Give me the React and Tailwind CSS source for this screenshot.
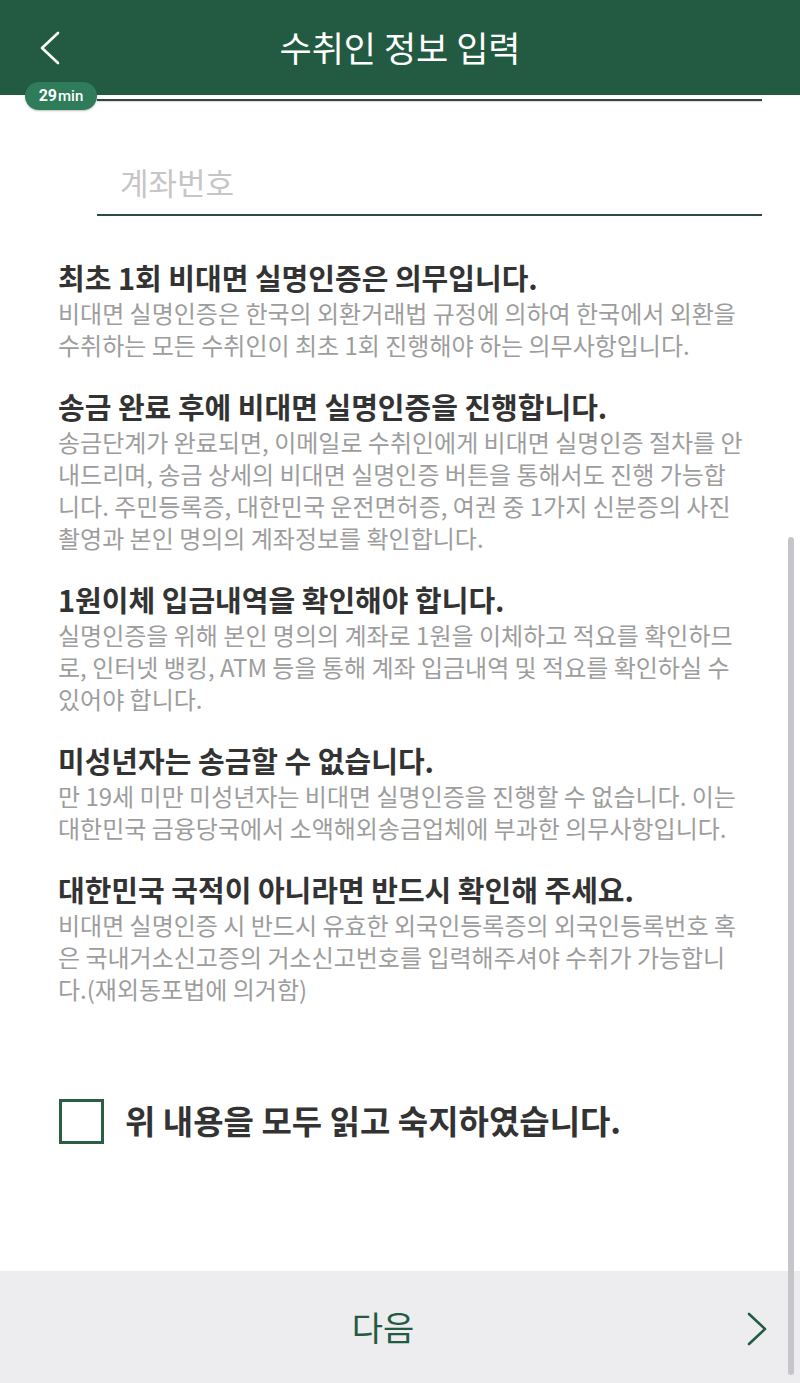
import React from "react";

const sections = [
  {
    title: "최초 1회 비대면 실명인증은 의무입니다.",
    lines: [
      "비대면 실명인증은 한국의 외환거래법 규정에 의하여 한국에서 외환을",
      "수취하는 모든 수취인이 최초 1회 진행해야 하는 의무사항입니다.",
    ],
  },
  {
    title: "송금 완료 후에 비대면 실명인증을 진행합니다.",
    lines: [
      "송금단계가 완료되면, 이메일로 수취인에게 비대면 실명인증 절차를 안",
      "내드리며, 송금 상세의 비대면 실명인증 버튼을 통해서도 진행 가능합",
      "니다. 주민등록증, 대한민국 운전면허증, 여권 중 1가지 신분증의 사진",
      "촬영과 본인 명의의 계좌정보를 확인합니다.",
    ],
  },
  {
    title: "1원이체 입금내역을 확인해야 합니다.",
    lines: [
      "실명인증을 위해 본인 명의의 계좌로 1원을 이체하고 적요를 확인하므",
      "로, 인터넷 뱅킹, ATM 등을 통해 계좌 입금내역 및 적요를 확인하실 수",
      "있어야 합니다.",
    ],
  },
  {
    title: "미성년자는 송금할 수 없습니다.",
    lines: [
      "만 19세 미만 미성년자는 비대면 실명인증을 진행할 수 없습니다. 이는",
      "대한민국 금융당국에서 소액해외송금업체에 부과한 의무사항입니다.",
    ],
  },
  {
    title: "대한민국 국적이 아니라면 반드시 확인해 주세요.",
    lines: [
      "비대면 실명인증 시 반드시 유효한 외국인등록증의 외국인등록번호 혹",
      "은 국내거소신고증의 거소신고번호를 입력해주셔야 수취가 가능합니",
      "다.(재외동포법에 의거함)",
    ],
  },
];

export default function App() {
  return (
    <div className="relative w-[800px] h-[1383px] overflow-hidden flex flex-col bg-white font-['Noto_Sans_CJK_KR',sans-serif]">
      {/* 헤더 */}
      <header className="h-[95px] shrink-0 bg-[#235b42] grid grid-cols-[100px_1fr_100px] items-center">
        <button className="pl-[39px] flex items-center">
          <svg width="22" height="34" viewBox="0 0 22 34" fill="none">
            <polyline points="19,2 3,17 19,32" stroke="#ffffff" strokeWidth="2.6" strokeLinecap="round" strokeLinejoin="round" />
          </svg>
        </button>
        <h1 className="text-center text-white text-[35px] leading-none font-normal pb-[2px]">수취인 정보 입력</h1>
        <div />
      </header>

      {/* 타이머 배지 */}
      <div className="absolute left-[25px] top-[82px] w-[72px] h-[28px] rounded-full bg-[#2f7c5a] shadow-[0_1px_2px_rgba(0,0,0,0.25)] flex items-center justify-center text-white font-['Roboto',sans-serif]">
        <span className="text-[16px] font-bold leading-none">29</span>
        <span className="text-[15px] font-medium leading-none ml-[1px]">min</span>
      </div>

      {/* 진행 라인 */}
      <div className="mt-[4px] ml-[97px] mr-[38px] h-[2px] bg-[#34483e] shadow-[0_1px_1px_rgba(0,0,0,0.15)]" />

      {/* 계좌번호 입력 */}
      <div className="mt-[47px] ml-[97px] mr-[38px] border-b-2 border-[#2a4d3c]">
        <input
          placeholder="계좌번호"
          className="w-full h-[66px] pl-[23px] text-[31px] text-[#333] placeholder:text-[#c6c6c6] bg-transparent outline-none"
        />
      </div>

      {/* 안내 문구 */}
      <div className="mt-[43px] px-[58px] flex flex-col gap-[27px]">
        {sections.map((s) => (
          <section key={s.title}>
            <h2 className="text-[29px] leading-[36px] font-bold text-[#333333] whitespace-nowrap mb-[2px]">{s.title}</h2>
            {s.lines.map((l) => (
              <p key={l} className="text-[24px] leading-[32px] text-[#9d9d9d] whitespace-nowrap">{l}</p>
            ))}
          </section>
        ))}
      </div>

      {/* 동의 체크 */}
      <label className="mt-[94px] ml-[59px] flex items-center gap-[21px] cursor-pointer">
        <span className="w-[45px] h-[45px] border-[3px] border-[#2b5e45] bg-white shrink-0" />
        <span className="text-[33px] font-bold text-[#333333] leading-none pb-[2px]">위 내용을 모두 읽고 숙지하였습니다.</span>
      </label>

      <div className="flex-1" />

      {/* 하단 버튼 */}
      <footer className="relative h-[112px] shrink-0 bg-[#ededef] flex items-center justify-center pr-[34px]">
        <span className="text-[34px] text-[#235b42] leading-none">다음</span>
        <svg className="absolute right-[32px] top-[41px]" width="22" height="34" viewBox="0 0 22 34" fill="none">
          <polyline points="3,2 19,17 3,32" stroke="#235b42" strokeWidth="2.6" strokeLinecap="round" strokeLinejoin="round" />
        </svg>
      </footer>

      {/* 스크롤바 */}
      <div className="absolute right-[6px] top-[537px] w-[6px] h-[838px] rounded-full bg-[#c6c6ca]" />
    </div>
  );
}
